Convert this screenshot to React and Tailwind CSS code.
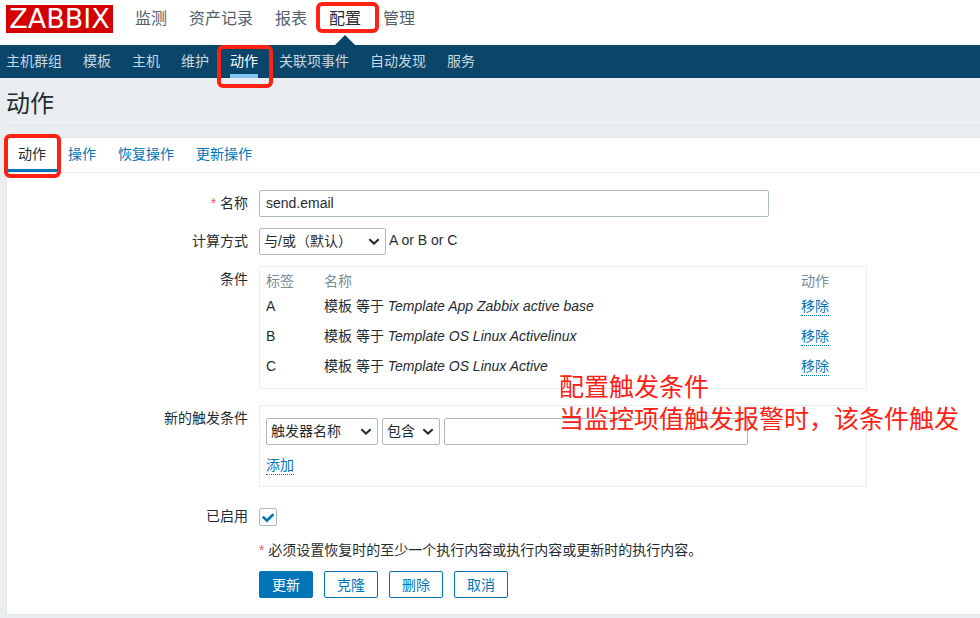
import { useState } from 'react';

const mainMenu = ['监测', '资产记录', '报表', '配置', '管理'];
const subMenu = ['主机群组', '模板', '主机', '维护', '动作', '关联项事件', '自动发现', '服务'];
const tabs = ['动作', '操作', '恢复操作', '更新操作'];

const initialConditions = [
  { label: 'A', template: 'Template App Zabbix active base' },
  { label: 'B', template: 'Template OS Linux Activelinux' },
  { label: 'C', template: 'Template OS Linux Active' },
];

const field = 'h-[27px] rounded-xs border border-[#acbbc2] bg-white pb-[2px] text-[#1f2c33]';
const dotted = 'inline-block cursor-pointer border-b border-dotted border-[#0275b8] leading-[18px] text-[#0275b8]';
const outlineButton = 'h-[27px] w-[54px] cursor-pointer rounded-xs border border-[#0275b8] bg-white text-[#0275b8]';

function Marker({ className }) {
  return (
    <span
      aria-hidden="true"
      className={`pointer-events-none absolute z-10 rounded-md border-4 border-[#ff2113] ${className}`}
    />
  );
}

function Select({ id, label, options, className }) {
  return (
    <span className="relative inline-flex">
      <select id={id} aria-label={label} className={`${field} ${className} appearance-none pl-1`}>
        {options.map((option) => (
          <option key={option}>{option}</option>
        ))}
      </select>
      <svg
        viewBox="0 0 12 8"
        className="pointer-events-none absolute top-[10px] right-[6px] h-2 w-3 fill-none stroke-[#1f2c33] stroke-2"
      >
        <path d="M1.3 1.2 6 5.6l4.7-4.4" />
      </svg>
    </span>
  );
}

function Row({ label, htmlFor, required, className = '', children }) {
  return (
    <div className={`grid grid-cols-[241px_1fr] gap-x-[11px] ${className}`}>
      <label htmlFor={htmlFor} className="text-right leading-[27px]">
        {required && <span className="text-[#e45959]">* </span>}
        {label}
      </label>
      <div className="min-w-0">{children}</div>
    </div>
  );
}

export default function App() {
  const [name, setName] = useState('send.email');
  const [conditions, setConditions] = useState(initialConditions);
  const [value, setValue] = useState('');
  const [enabled, setEnabled] = useState(true);

  const removeCondition = (label) => {
    setConditions(conditions.filter((condition) => condition.label !== label));
  };

  return (
    <div className="min-h-screen overflow-x-hidden bg-[#ebeef0] pb-[2px] font-['Liberation_Sans','Noto_Sans_CJK_SC',sans-serif] text-[14px] leading-5 text-[#1f2c33]">
      <header>
        <div className="flex h-[45px] items-start gap-[22px] bg-white pt-[5px] pl-[6px]">
          <a
            href="#"
            className="flex h-7 w-[107px] items-center justify-center bg-[#d40000] font-['DejaVu_Sans',sans-serif] text-[27px] leading-7 text-white"
          >
            ZABBIX
          </a>
          <nav className="flex h-10 gap-[22px] text-[16px] leading-[27px] text-[#51616b]">
            {mainMenu.map((item) => (
              <a key={item} href="#" className={item === '配置' ? 'relative text-[#1f2c33]' : ''}>
                {item}
                {item === '配置' && (
                  <>
                    <Marker className="-top-[3px] -left-[13px] h-[31px] w-[63px]" />
                    <svg viewBox="0 0 20 10" className="absolute bottom-0 left-[6px] h-[10px] w-5 fill-[#0a466a]">
                      <path d="M0 10 10 0l10 10z" />
                    </svg>
                  </>
                )}
              </a>
            ))}
          </nav>
        </div>
        <nav className="flex h-[33px] gap-[21px] bg-[#0a466a] pl-[6px] leading-[33px] text-[#c8d8e1]">
          {subMenu.map((item) => (
            <a
              key={item}
              href="#"
              className={item === '动作' ? 'relative border-b-4 border-[#80c3f3] text-white' : ''}
            >
              {item}
              {item === '动作' && <Marker className="top-0 -left-[13px] h-[43px] w-14" />}
            </a>
          ))}
        </nav>
      </header>

      <main className="pl-[6px]">
        <h1 className="h-12 border-b border-[#dfe4e7] text-[24px] leading-[52px]">动作</h1>

        <form
          onSubmit={(e) => e.preventDefault()}
          className="mt-[11px] border-y border-l border-[#dfe4e7] bg-white pb-4"
        >
          <nav className="flex h-[35px] border-b border-[#ebeef0] leading-[32px] text-[#0275b8]">
            {tabs.map((tab, index) => (
              <a
                key={tab}
                href="#"
                className={`px-[11px] ${index === 0 ? 'relative border-b-[3px] border-[#0275b8] text-[#1f2c33]' : ''}`}
              >
                {tab}
                {index === 0 && <Marker className="-top-[4px] -left-[3px] h-[44px] w-[57px]" />}
              </a>
            ))}
          </nav>

          <Row label="名称" htmlFor="name" required className="mt-[17px]">
            <input
              id="name"
              type="text"
              value={name}
              onChange={(e) => setName(e.target.value)}
              className={`${field} block w-[510px] px-[6px]`}
            />
          </Row>

          <Row label="计算方式" htmlFor="evaltype" className="mt-[11px]">
            <div className="flex gap-[3px]">
              <Select id="evaltype" options={['与/或（默认）', '与', '或', '自定义表达式']} className="w-[127px]" />
              <span className="leading-[25px]">A or B or C</span>
            </div>
          </Row>

          <Row label="条件" className="mt-[11px]">
            <div className="relative w-[608px] border border-[#ebeef0] px-[6px] pt-1 pb-[7px]">
              <table className="w-full table-fixed text-left">
                <thead>
                  <tr className="h-5 text-[#768d99]">
                    <th className="w-[58px] font-normal">标签</th>
                    <th className="font-normal">名称</th>
                    <th className="w-[59px] font-normal">动作</th>
                  </tr>
                </thead>
                <tbody>
                  {conditions.map((condition) => (
                    <tr key={condition.label} className="h-[30px]">
                      <td>{condition.label}</td>
                      <td>
                        模板 等于 <em>{condition.template}</em>
                      </td>
                      <td>
                        <button type="button" onClick={() => removeCondition(condition.label)} className={dotted}>
                          移除
                        </button>
                      </td>
                    </tr>
                  ))}
                </tbody>
              </table>
              <p className="pointer-events-none absolute top-[104px] left-[299px] z-10 text-[25px] leading-8 whitespace-nowrap text-[#ff2113]">
                配置触发条件
                <br />
                当监控项值触发报警时，该条件触发
              </p>
            </div>
          </Row>

          <Row label="新的触发条件" htmlFor="condition-type" className="mt-4">
            <div className="w-[608px] border border-[#ebeef0] px-[6px] pt-3 pb-[11px]">
              <div className="flex gap-1">
                <Select id="condition-type" options={['触发器名称', '模板', '主机']} className="w-28" />
                <Select label="运算符" options={['包含', '不包含']} className="w-[58px]" />
                <input
                  type="text"
                  aria-label="值"
                  value={value}
                  onChange={(e) => setValue(e.target.value)}
                  className={`${field} w-[304px] px-[6px]`}
                />
              </div>
              <button type="button" className={`${dotted} mt-[11px] block`}>
                添加
              </button>
            </div>
          </Row>

          <Row label="已启用" htmlFor="enabled" className="mt-4">
            <div className="relative flex h-[27px] items-center">
              <input
                id="enabled"
                type="checkbox"
                checked={enabled}
                onChange={(e) => setEnabled(e.target.checked)}
                className="size-[18px] appearance-none rounded-xs border border-[#acbbc2] bg-white"
              />
              {enabled && (
                <svg
                  viewBox="0 0 18 18"
                  className="pointer-events-none absolute left-0 size-[18px] fill-none stroke-[#0275b8] stroke-[2.6]"
                >
                  <path d="m3.8 8.6 4 4 6.6-6.4" />
                </svg>
              )}
            </div>
          </Row>

          <div className="pl-[252px]">
            <p className="mt-[7px] leading-[27px]">
              <span className="text-[#e45959]">* </span>
              必须设置恢复时的至少一个执行内容或执行内容或更新时的执行内容。
            </p>
            <div className="mt-[7px] flex gap-[11px]">
              <button
                type="submit"
                className="h-[27px] w-[54px] cursor-pointer rounded-xs border border-[#0275b8] bg-[#0275b8] text-white"
              >
                更新
              </button>
              <button type="button" className={outlineButton}>克隆</button>
              <button type="button" className={outlineButton}>删除</button>
              <button type="button" className={outlineButton}>取消</button>
            </div>
          </div>
        </form>
      </main>
    </div>
  );
}
